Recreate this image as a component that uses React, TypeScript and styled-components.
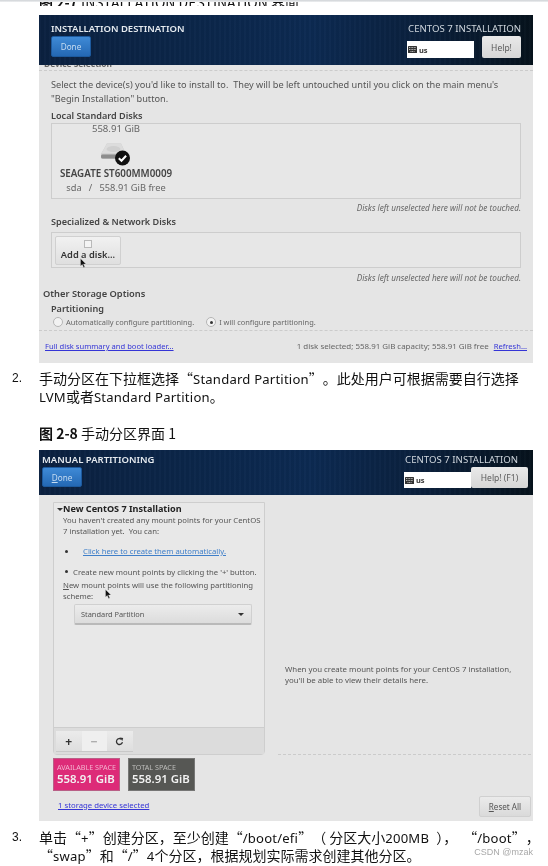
import React from "react";
import styled, { createGlobalStyle } from "styled-components";

const Global = createGlobalStyle`
  html, body { margin: 0; padding: 0; background: #fff; }
  #root { width: 548px; height: 866px; overflow: hidden; }
  * { box-sizing: border-box; }
`;

const Page = styled.div`
  position: relative;
  width: 548px;
  height: 866px;
  overflow: hidden;
  background: #fff;
  font-family: "Noto Sans", "Noto Sans CJK SC", sans-serif;
  filter: blur(0.35px);
`;
const TopShade = styled.div`
  height: 2px;
  background: linear-gradient(#cfd3d6, #eef0f1);
`;
const Caption = styled.div<{ $top?: number }>`
  padding-left: 39px;
  margin-top: ${(p) => p.$top ?? 0}px;
  font-family: "Noto Sans CJK SC", sans-serif;
  font-size: 14px;
  line-height: 16px;
  height: 16px;
  color: #111;
  white-space: pre;
`;
const CaptionBold = styled.b`
  font-weight: 700;
`;
const Clipped = styled.div`
  height: 4px;
  overflow: hidden;
`;
const ClippedInner = styled(Caption)`
  margin-top: -8px;
`;
const Shot = styled.section<{ $top: number; $height: number }>`
  margin: ${(p) => p.$top}px 0 0 39px;
  width: 494px;
  height: ${(p) => p.$height}px;
  background: #e5e5e5;
  display: flex;
  flex-direction: column;
  color: #4c4c4c;
  font-size: 8.2px;
`;
const Header = styled.header<{ $h: number; $pl: number; $pr: number; $pt: number }>`
  flex: none;
  height: ${(p) => p.$h}px;
  padding: ${(p) => p.$pt}px ${(p) => p.$pr}px 0 ${(p) => p.$pl}px;
  display: flex;
  justify-content: space-between;
  color: #e8edf2;
  background:
    repeating-linear-gradient(90deg, rgba(255,255,255,0.014) 0 2px, rgba(0,0,0,0.03) 2px 5px),
    linear-gradient(90deg, #0b2140 0%, #0b2649 30%, #0c2a52 55%, #0a1f3a 80%, #06121c 100%);
`;
const HeaderCol = styled.div`
  display: flex;
  flex-direction: column;
`;
const HeaderRight = styled(HeaderCol)`
  align-items: flex-end;
`;
const Title = styled.div`
  font-size: 9.5px;
  font-weight: 600;
  line-height: 12px;
  white-space: nowrap;
  color: #e6ebf0;
`;
const Product = styled.div<{ $mr?: number }>`
  font-size: 9.65px;
  line-height: 12px;
  color: #cfd6dd;
  margin-right: ${(p) => p.$mr ?? 0}px;
  white-space: nowrap;
`;
const Done = styled.div<{ $w: number; $h: number; $mt: number }>`
  width: ${(p) => p.$w}px;
  height: ${(p) => p.$h}px;
  margin-top: ${(p) => p.$mt}px;
  background: linear-gradient(#3f8ad6, #2468b4);
  border-radius: 2px;
  border: 1px solid #1d5a9e;
  font-size: 8.2px;
  color: #c5dcf2;
  display: flex;
  align-items: center;
  justify-content: center;
`;
const Mnemonic = styled.span`
  text-decoration: underline;
`;
const Tools = styled.div<{ $gap: number; $mt: number }>`
  display: flex;
  align-items: flex-start;
  gap: ${(p) => p.$gap}px;
  margin-top: ${(p) => p.$mt}px;
`;
const Layout = styled.div<{ $w: number; $h: number; $mt: number }>`
  width: ${(p) => p.$w}px;
  height: ${(p) => p.$h}px;
  margin-top: ${(p) => p.$mt}px;
  background: #fff;
  display: flex;
  align-items: center;
  gap: 2px;
  padding-left: 1px;
  font-size: 7.5px;
  font-weight: 700;
  color: #333;
`;
const Help = styled.div<{ $w: number; $h: number }>`
  width: ${(p) => p.$w}px;
  height: ${(p) => p.$h}px;
  background: linear-gradient(#e9e9e9, #d6d6d6);
  border-radius: 2px;
  font-size: 8.5px;
  color: #5c5c5c;
  display: flex;
  align-items: center;
  justify-content: center;
`;
const Body = styled.div`
  flex: 1;
  display: flex;
  flex-direction: column;
  min-height: 0;
`;
const HeadSliver = styled.div`
  height: 5px;
  padding-left: 5px;
  overflow: hidden;
  font-size: 8.4px;
  font-weight: 700;
  line-height: 10px;
  color: #666;
`;
const SliverText = styled.div`
  margin-top: -6px;
`;
const Dash = styled.div<{ $mt?: number }>`
  flex: none;
  border-top: 1px dashed #cbcbcb;
  margin-top: ${(p) => p.$mt ?? 0}px;
`;
const Section = styled.div`
  padding: 0 12px;
  display: flex;
  flex-direction: column;
`;
const Intro = styled.p`
  margin: 7px 0 0;
  font-size: 9.2px;
  line-height: 14px;
  color: #555;
  white-space: pre;
`;
const Label = styled.div<{ $mt: number }>`
  margin-top: ${(p) => p.$mt}px;
  font-size: 9.1px;
  line-height: 11px;
  font-weight: 600;
  color: #444;
`;
const DiskBox = styled.div<{ $h: number; $mt: number; $pad: number }>`
  height: ${(p) => p.$h}px;
  margin-top: ${(p) => p.$mt}px;
  border: 1px solid #cdcdcd;
  background: #e7e7e7;
  padding: ${(p) => p.$pad}px 3px;
`;
const DiskCard = styled.div`
  width: 118px;
  margin-left: 2px;
  display: flex;
  flex-direction: column;
  align-items: center;
`;
const DiskSize = styled.div`
  font-size: 9.6px;
  line-height: 10px;
  color: #666;
  margin-bottom: 9px;
`;
const DiskName = styled.div`
  font-size: 9.8px;
  font-weight: 600;
  line-height: 13px;
  color: #444;
  white-space: nowrap;
  margin-top: 1px;
`;
const DiskMeta = styled.div`
  font-size: 9.25px;
  line-height: 14px;
  color: #666;
  white-space: pre;
  margin-top: 1px;
`;
const Note = styled.div<{ $mt: number }>`
  margin-top: ${(p) => p.$mt}px;
  text-align: right;
  font-size: 8.2px;
  line-height: 10px;
  font-style: italic;
  color: #666;
`;
const AddDisk = styled.div`
  position: relative;
  width: 66px;
  height: 29px;
  background: linear-gradient(#f1f1f1, #dfdfdf);
  border: 1px solid #d0d0d0;
  border-radius: 2px;
  display: flex;
  flex-direction: column;
  align-items: center;
  padding-top: 3px;
  font-size: 9.3px;
  font-weight: 600;
  color: #333;
  line-height: 13px;
`;
const DiskGlyph = styled.span`
  width: 8px;
  height: 8px;
  border: 1px solid #b9b9b9;
  background: #f4f4f4;
`;
const Pointer = styled.svg<{ $l: number; $t: number }>`
  position: absolute;
  left: ${(p) => p.$l}px;
  top: ${(p) => p.$t}px;
`;
const OtherTitle = styled.div`
  margin: 4px 0 0 4px;
  font-size: 9.3px;
  line-height: 13px;
  font-weight: 600;
  color: #444;
`;
const RadioRow = styled.div`
  margin: 2px 0 0 2px;
  display: flex;
  align-items: center;
  font-size: 7.45px;
  color: #666;
  line-height: 12px;
`;
const Radio = styled.span<{ $on?: boolean; $ml?: number }>`
  width: 10px;
  height: 10px;
  border-radius: 50%;
  border: 1px solid #b5b5b5;
  background: #f2f2f2;
  margin: 0 3px 0 ${(p) => p.$ml ?? 0}px;
  display: flex;
  align-items: center;
  justify-content: center;
  &::after {
    content: "";
    width: 3px;
    height: 3px;
    border-radius: 50%;
    background: ${(p) => (p.$on ? "#333" : "transparent")};
  }
`;
const Footer = styled.div`
  margin-top: 9px;
  padding: 0 6px;
  display: flex;
  align-items: center;
  line-height: 12px;
  font-size: 7.6px;
  color: #666;
`;
const BlueLink = styled.span`
  color: #3535d6;
  text-decoration: underline;
`;
const FooterMeta = styled.span`
  margin-left: auto;
  margin-right: 5px;
  font-size: 7.95px;
`;
const Para = styled.div<{ $top: number; $h: number; $lh: number }>`
  display: flex;
  margin-top: ${(p) => p.$top}px;
  height: ${(p) => p.$h}px;
  font-family: "Noto Sans CJK SC", "Noto Sans", sans-serif;
  color: #111;
  font-size: 14px;
  line-height: ${(p) => p.$lh}px;
`;
const ParaNum = styled.span`
  width: 39px;
  flex: none;
  padding-left: 12px;
  font-family: "Liberation Sans", sans-serif;
  font-size: 12px;
`;
const ParaText = styled.div`
  width: 500px;
  white-space: pre;
`;
const Lat = styled.span`
  font-family: "Noto Sans", sans-serif;
  font-size: 13.1px;
  letter-spacing: 0.2px;
`;
const Quote = styled.span<{ $open?: boolean }>`
  display: inline-block;
  width: 14px;
  text-align: ${(p) => (p.$open ? "right" : "left")};
`;
const Gap = styled.span<{ $w: number }>`
  display: inline-block;
  width: ${(p) => p.$w}px;
`;
const Split = styled.div`
  flex: 1;
  display: grid;
  grid-template-columns: 239px 1fr;
  min-height: 0;
`;
const LeftCol = styled.div`
  padding: 7px 0 0 14px;
  display: flex;
  flex-direction: column;
`;
const MountPanel = styled.div`
  width: 212px;
  height: 253px;
  border: 1px solid #cecece;
  border-radius: 0 0 4px 4px;
  background: #e8e8e8;
  display: flex;
  flex-direction: column;
`;
const MountBody = styled.div`
  flex: 1;
  padding: 0 0 0 3px;
  position: relative;
`;
const MountTitle = styled.div`
  font-size: 9.1px;
  font-weight: 700;
  line-height: 12px;
  color: #222;
  display: flex;
  align-items: center;
`;
const Caret = styled.span`
  width: 0;
  height: 0;
  border-left: 3px solid transparent;
  border-right: 3px solid transparent;
  border-top: 3px solid #333;
`;
const MountText = styled.p<{ $mt?: number }>`
  margin: ${(p) => p.$mt ?? 0}px 0 0 6px;
  font-size: 7.72px;
  line-height: 10.5px;
  color: #555;
  white-space: pre;
`;
const Bullet = styled.div<{ $mt: number; $gap: number }>`
  display: flex;
  align-items: center;
  gap: ${(p) => p.$gap}px;
  margin: ${(p) => p.$mt}px 0 0 8px;
  font-size: 7.72px;
  line-height: 10.5px;
  color: #555;
`;
const Dot = styled.span`
  width: 3px;
  height: 3px;
  border-radius: 50%;
  background: #333;
  flex: none;
`;
const AutoLink = styled.span`
  color: #3f7fc9;
  text-decoration: underline;
`;
const Combo = styled.div`
  margin: 3px 0 0 17px;
  width: 178px;
  height: 21px;
  background: linear-gradient(#ececec, #dcdcdc);
  border: 1px solid #d0d0d0;
  border-bottom: 2px solid #b9b9b9;
  border-radius: 2px;
  padding: 0 7px 0 6px;
  display: flex;
  align-items: center;
  justify-content: space-between;
  font-size: 7.4px;
  color: #555;
`;
const Toolbar = styled.div`
  flex: none;
  height: 27px;
  background: #dcdcdc;
  border-top: 1px solid #cdcdcd;
  padding: 3px 0 0 2px;
  display: flex;
  align-items: flex-start;
`;
const ToolBtn = styled.div<{ $off?: boolean }>`
  width: 25.5px;
  height: 21px;
  display: flex;
  align-items: center;
  justify-content: center;
  background: ${(p) => (p.$off ? "#efefef" : "linear-gradient(#ebebeb, #dedede)")};
  color: ${(p) => (p.$off ? "#aaa" : "#333")};
  font-size: 12px;
  font-weight: 700;
  border-bottom: 1px solid #c8c8c8;
`;
const Tiles = styled.div`
  display: flex;
  gap: 8px;
  margin-top: 3px;
`;
const Tile = styled.div<{ $bg: string; $sub: string }>`
  width: 67px;
  height: 33px;
  background: ${(p) => p.$bg};
  border: 1px solid rgba(150, 150, 150, 0.5);
  padding: 4px 0 0 3px;
  color: #f2f2f2;
  & > small {
    display: block;
    font-size: 7.2px;
    line-height: 9px;
    color: ${(p) => p.$sub};
    white-space: nowrap;
  }
  & > strong {
    display: block;
    font-size: 11.4px;
    line-height: 14px;
    font-weight: 600;
    white-space: nowrap;
  }
`;
const StorageLink = styled.div`
  margin: 9px 0 0 5px;
  font-size: 7.75px;
  line-height: 11px;
  color: #3535d6;
  text-decoration: underline;
`;
const RightCol = styled.div`
  display: flex;
  flex-direction: column;
  padding-right: 2px;
`;
const RightMsg = styled.div`
  height: 259px;
  padding: 169px 0 0 7px;
  font-size: 7.85px;
  line-height: 10.5px;
  color: #555;
  white-space: pre;
`;
const ResetRow = styled.div`
  margin-top: 41px;
  display: flex;
  justify-content: flex-end;
`;
const Reset = styled.div`
  width: 52px;
  height: 21px;
  background: linear-gradient(#ebebeb, #dadada);
  border: 1px solid #d0d0d0;
  border-radius: 2px;
  font-size: 8.1px;
  color: #555;
  display: flex;
  align-items: center;
  justify-content: center;
`;
const Watermark = styled.div`
  position: absolute;
  right: 15px;
  top: 847px;
  font-family: "Liberation Sans", sans-serif;
  font-size: 9px;
  line-height: 11px;
  color: #a8a8a8;
  background: rgba(255, 255, 255, 0.7);
`;

const Kbd = () => (
  <svg width="9" height="7" viewBox="0 0 9 7">
    <rect width="9" height="7" rx="0.6" fill="#333" />
    <path d="M1 1.5h7M1 3.5h7M2.5 5.5h4" stroke="#ddd" strokeWidth="0.8" strokeDasharray="1 0.6" />
  </svg>
);
const Arrow = ({ l, t }: { l: number; t: number }) => (
  <Pointer $l={l} $t={t} width="7" height="10" viewBox="0 0 7 10">
    <path d="M0.5 0.5v7.5l1.8-1.6 1.3 3 1.2-.5-1.3-2.9H6z" fill="#111" stroke="#eee" strokeWidth="0.3" />
  </Pointer>
);
const DiskIcon = () => (
  <svg width="30" height="23" viewBox="0 0 30 23">
    <path d="M6 0.5h14l5 10.5v3a2 2 0 0 1-2 2H2a2 2 0 0 1-2-2v-3z" fill="#c9c9c9" />
    <path d="M6 0.5h14l4.5 10H0.5z" fill="#dcdcdc" />
    <ellipse cx="12.5" cy="6" rx="7" ry="3" fill="#cfcfcf" />
    <rect x="0" y="11.5" width="25" height="4" rx="1.5" fill="#8d8d8d" />
    <circle cx="21.5" cy="15" r="7.5" fill="#111" />
    <path d="M17.8 15.2l2.7 2.6 4.6-5" fill="none" stroke="#fff" strokeWidth="2" />
  </svg>
);
const Q = ({ children }: { children: React.ReactNode }) => (
  <>
    <Quote $open>“</Quote>
    <Lat>{children}</Lat>
    <Quote>”</Quote>
  </>
);

export default function App() {
  return (
    <Page>
      <Global />
      <TopShade />
      <Clipped>
        <ClippedInner>
          <CaptionBold>图 2-7</CaptionBold> INSTALLATION DESTINATION 界面
        </ClippedInner>
      </Clipped>

      <Shot $top={9} $height={348}>
        <Header $h={50} $pl={12} $pr={12} $pt={8}>
          <HeaderCol>
            <Title>INSTALLATION DESTINATION</Title>
            <Done $w={40} $h={21} $mt={1}>Done</Done>
          </HeaderCol>
          <HeaderRight>
            <Product>CENTOS 7 INSTALLATION</Product>
            <Tools $gap={8} $mt={1}>
              <Layout $w={67} $h={17} $mt={5}><Kbd />us</Layout>
              <Help $w={39} $h={22}>Help!</Help>
            </Tools>
          </HeaderRight>
        </Header>
        <Body>
          <HeadSliver><SliverText>Device Selection</SliverText></HeadSliver>
          <Dash />
          <Section>
            <Intro>{"Select the device(s) you'd like to install to.  They will be left untouched until you click on the main menu's\n\"Begin Installation\" button."}</Intro>
            <Label $mt={4}>Local Standard Disks</Label>
            <DiskBox $h={76} $mt={2} $pad={0}>
              <DiskCard>
                <DiskSize>558.91 GiB</DiskSize>
                <DiskIcon />
                <DiskName>SEAGATE ST600MM0009</DiskName>
                <DiskMeta>{"sda   /   558.91 GiB free"}</DiskMeta>
              </DiskCard>
            </DiskBox>
            <Note $mt={4}>Disks left unselected here will not be touched.</Note>
            <Label $mt={3}>Specialized &amp; Network Disks</Label>
            <DiskBox $h={36} $mt={5} $pad={3}>
              <AddDisk>
                <DiskGlyph />
                Add a disk...
                <Arrow l={24} t={21} />
              </AddDisk>
            </DiskBox>
            <Note $mt={5}>Disks left unselected here will not be touched.</Note>
          </Section>
          <OtherTitle>Other Storage Options</OtherTitle>
          <Section>
            <Label $mt={3}>Partitioning</Label>
            <RadioRow>
              <Radio />
              Automatically configure partitioning.
              <Radio $on $ml={12} />
              I will configure partitioning.
            </RadioRow>
          </Section>
          <Dash $mt={2} />
          <Footer>
            <BlueLink>Full disk summary and boot loader...</BlueLink>
            <FooterMeta>1 disk selected; 558.91 GiB capacity; 558.91 GiB free</FooterMeta>
            <BlueLink>Refresh...</BlueLink>
          </Footer>
        </Body>
      </Shot>

      <Para $top={7} $h={34} $lh={17}>
        <ParaNum>2.</ParaNum>
        <ParaText>
          手动分区在下拉框选择<Q>Standard Partition</Q>。此处用户可根据需要自行选择{"\n"}
          <Lat>LVM</Lat>或者<Lat>Standard Partition</Lat>。
        </ParaText>
      </Para>
      <Caption $top={21}>
        <CaptionBold>图 2-8</CaptionBold> 手动分区界面 1
      </Caption>

      <Shot $top={9} $height={371}>
        <Header $h={45} $pl={3} $pr={5} $pt={4}>
          <HeaderCol>
            <Title>MANUAL PARTITIONING</Title>
            <Done $w={40} $h={20} $mt={1}><span><Mnemonic>D</Mnemonic>one</span></Done>
          </HeaderCol>
          <HeaderRight>
            <Product $mr={10}>CENTOS 7 INSTALLATION</Product>
            <Tools $gap={0} $mt={1}>
              <Layout $w={67} $h={16} $mt={5}><Kbd />us</Layout>
              <Help $w={57} $h={21}>Help! (F1)</Help>
            </Tools>
          </HeaderRight>
        </Header>
        <Split>
          <LeftCol>
            <MountPanel>
              <MountBody>
                <MountTitle><Caret />New CentOS 7 Installation</MountTitle>
                <MountText>{"You haven't created any mount points for your CentOS\n7 installation yet.  You can:"}</MountText>
                <Bullet $mt={10} $gap={15}><Dot /><AutoLink>Click here to create them automatically.</AutoLink></Bullet>
                <Bullet $mt={10} $gap={5}><Dot />Create new mount points by clicking the '+' button.</Bullet>
                <MountText $mt={3}><Mnemonic>N</Mnemonic>{"ew mount points will use the following partitioning\nscheme:"}</MountText>
                <Arrow l={51} t={86} />
                <Combo>
                  Standard Partition
                  <Caret />
                </Combo>
              </MountBody>
              <Toolbar>
                <ToolBtn>+</ToolBtn>
                <ToolBtn $off>−</ToolBtn>
                <ToolBtn>
                  <svg width="9" height="9" viewBox="0 0 9 9">
                    <path d="M7.4 5.2A3 3 0 1 1 6.4 2.2" fill="none" stroke="#333" strokeWidth="1.3" />
                    <path d="M5 0.4l3.2.6-.9 3z" fill="#333" />
                  </svg>
                </ToolBtn>
              </Toolbar>
            </MountPanel>
            <Tiles>
              <Tile $bg="#dd2b78" $sub="#f3b3cf">
                <small>AVAILABLE SPACE</small>
                <strong>558.91 GiB</strong>
              </Tile>
              <Tile $bg="#565754" $sub="#bdbdbb">
                <small>TOTAL SPACE</small>
                <strong>558.91 GiB</strong>
              </Tile>
            </Tiles>
            <StorageLink>1 storage device selected</StorageLink>
          </LeftCol>
          <RightCol>
            <RightMsg>{"When you create mount points for your CentOS 7 installation,\nyou'll be able to view their details here."}</RightMsg>
            <Dash />
            <ResetRow><Reset><span><Mnemonic>R</Mnemonic>eset All</span></Reset></ResetRow>
          </RightCol>
        </Split>
      </Shot>

      <Para $top={8} $h={36} $lh={17}>
        <ParaNum>3.</ParaNum>
        <ParaText>
          单击<Q>+</Q>创建分区，至少创建<Q>/boot/efi</Q>（ 分区大小<Lat>200MB</Lat> <Gap $w={4} />），<Gap $w={6} /><Q>/boot</Q>，{"\n"}
          <Q>swap</Q>和<Q>/</Q><Lat>4</Lat>个分区，根据规划实际需求创建其他分区。
        </ParaText>
      </Para>
      <Watermark>CSDN @mzak</Watermark>
    </Page>
  );
}
